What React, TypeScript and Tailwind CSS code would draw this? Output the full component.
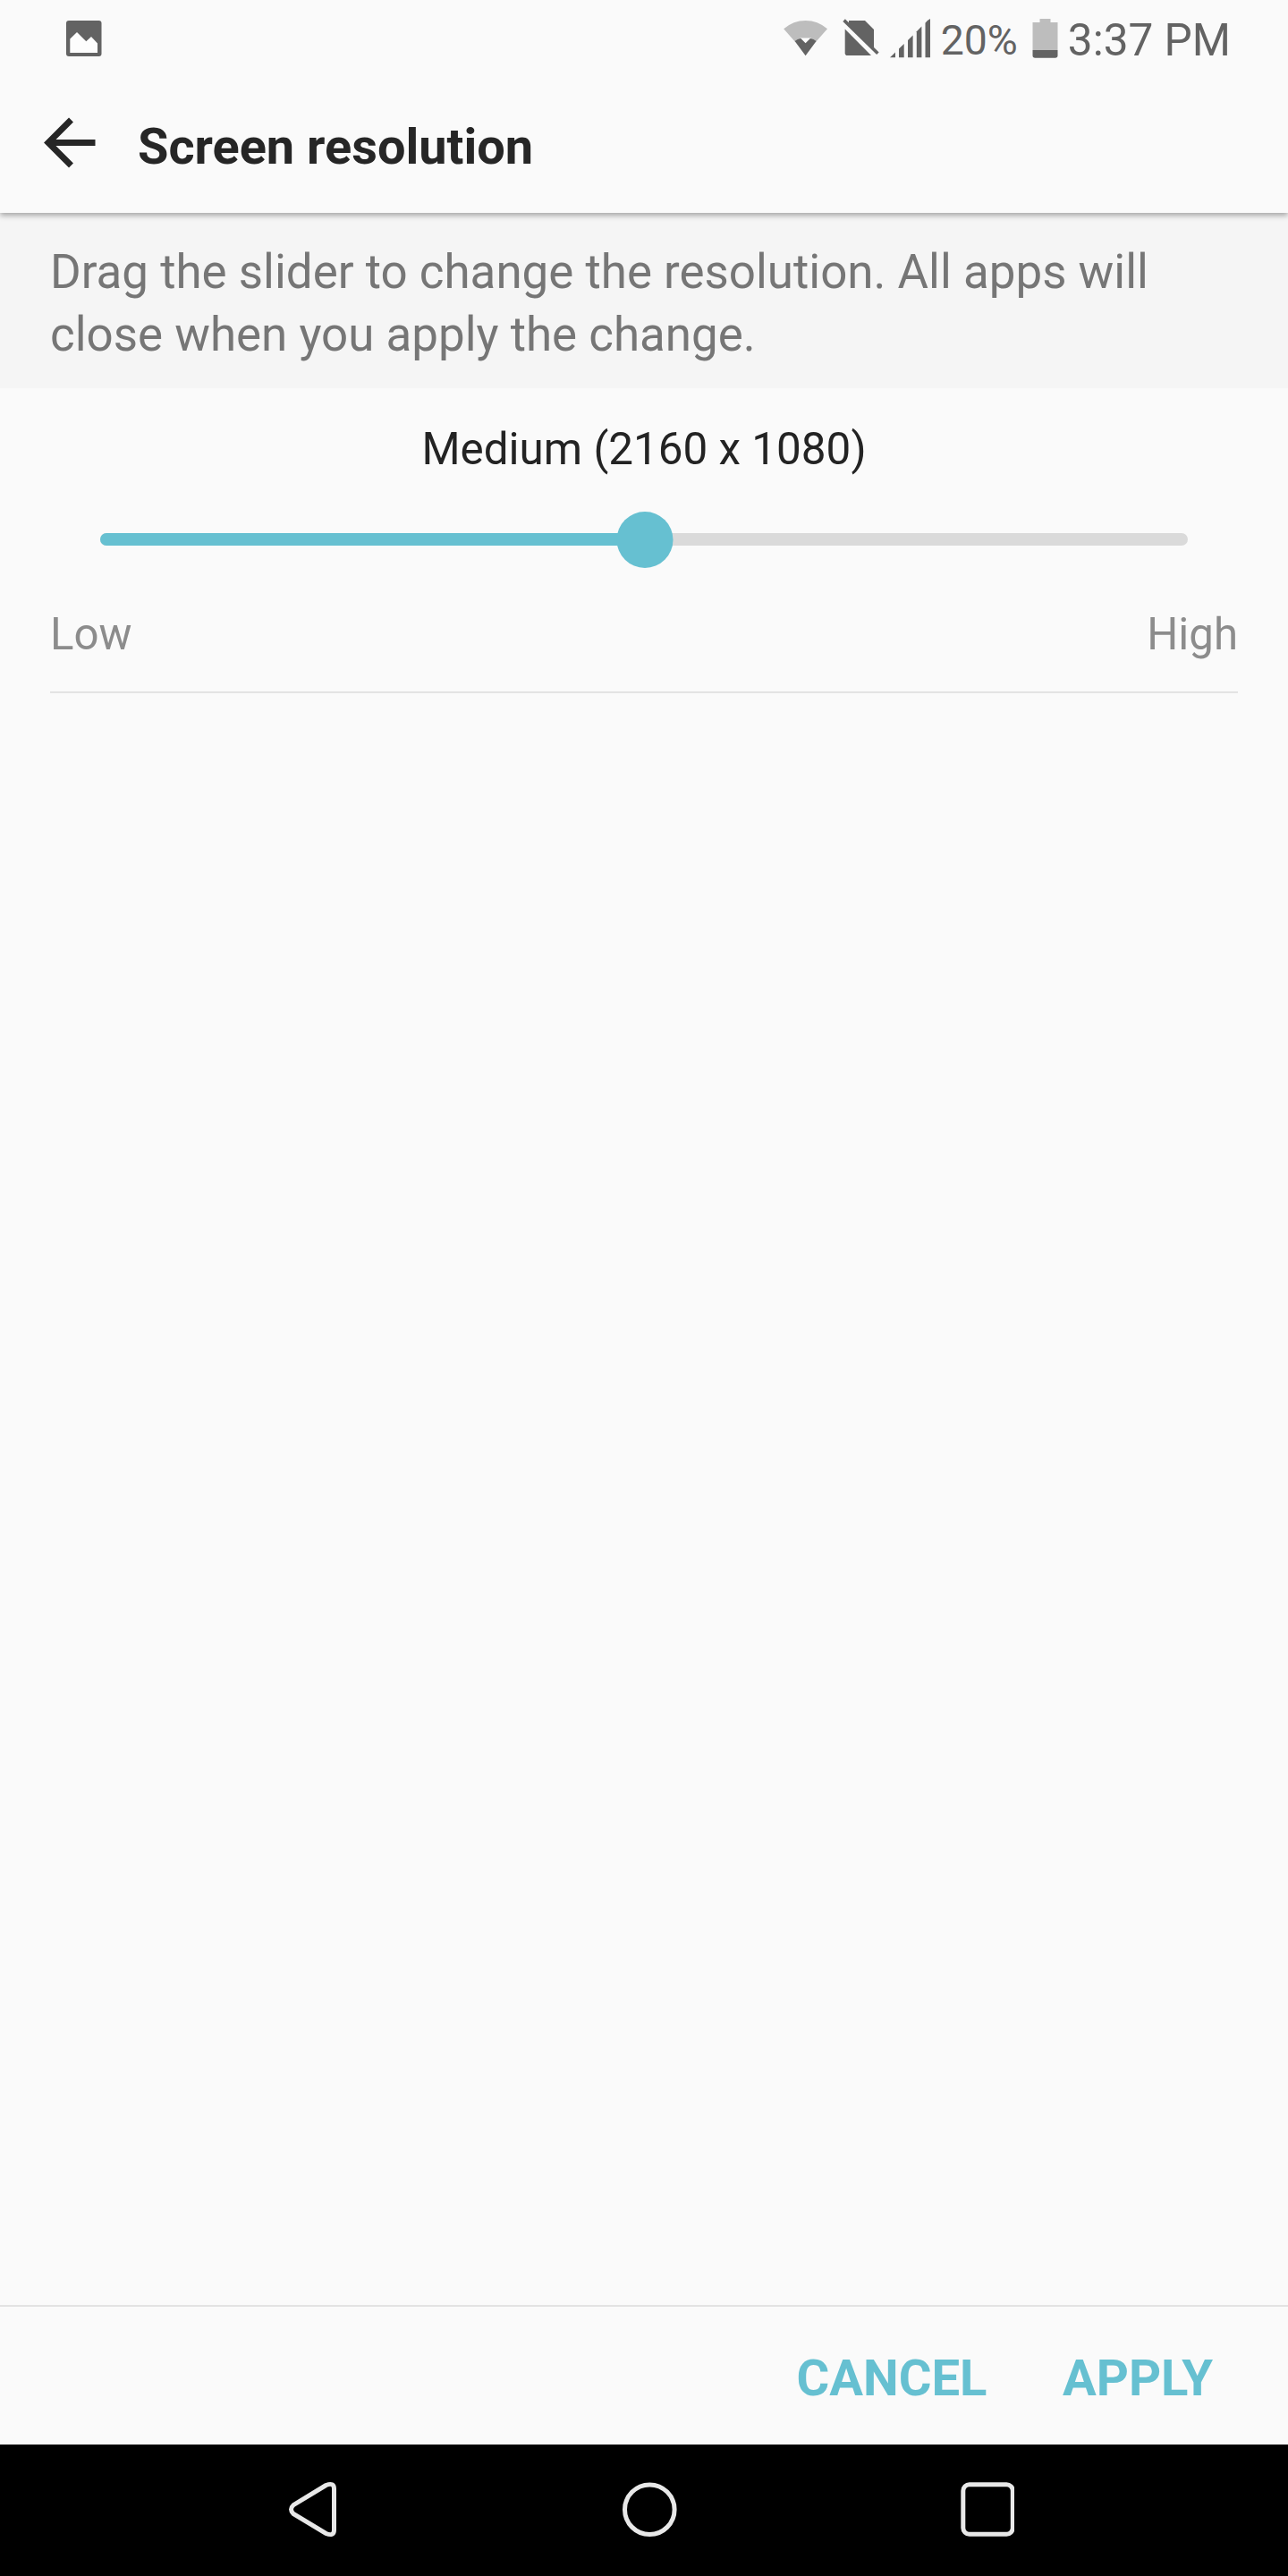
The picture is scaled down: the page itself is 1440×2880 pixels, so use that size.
import { useState } from "react";

const levels = [
  { name: "Low", size: "1440 x 720" },
  { name: "Medium", size: "2160 x 1080" },
  { name: "High", size: "2880 x 1440" },
];

function ImageIcon() {
  return (
    <svg width="40" height="44" viewBox="0 0 40 44">
      <rect x="0" y="2" width="39.5" height="40" rx="3" fill="#636363" />
      <path d="M4.3 22.5 12 15l10.3 10.3L28 20l7 7.5V38H4.3z" fill="#fdfdfd" />
    </svg>
  );
}

function WifiIcon() {
  return (
    <svg width="50" height="44" viewBox="0 0 50 44">
      <path d="M.2 11.2Q11 2 24.6 2T49 11.2L36.4 25.4 24.6 22 12.7 25.4z" fill="#bdbdbd" />
      <path d="M18.5 21.4H31L24.6 28z" fill="#fdfdfd" />
      <path d="M12.6 25Q15.5 22.3 19.3 21.9L24.6 27.2 29.9 21.9Q33.7 22.3 36.6 25L24.6 41.2z" fill="#636363" />
    </svg>
  );
}

function NoSimIcon() {
  return (
    <svg width="42" height="44" viewBox="0 0 42 44">
      <path d="M7 2h18l10 10v22.5L7 6z" fill="#636363" />
      <path d="M2.7 11.6 32 41H5.5q-2.8 0-2.8-2.8z" fill="#636363" />
      <path d="M1.6 1.6 39.4 38.8" stroke="#636363" strokeWidth="3.6" />
    </svg>
  );
}

function SignalIcon() {
  return (
    <svg width="47" height="44" viewBox="0 0 47 44" fill="#636363">
      <path d="M1 43.3 7 37.5v5.8z" />
      <path d="M11 33.6 16.7 28v15.3H11z" />
      <path d="M21 24 26.6 18.5v24.8H21z" />
      <path d="M30.8 14.2 36.4 8.6v34.7h-5.6z" />
      <path d="M40.5 4.7Q42 2 46 0v43.3h-5.5z" />
    </svg>
  );
}

function BatteryIcon() {
  return (
    <svg width="29" height="44" viewBox="0 0 29 44">
      <path d="M8.5 0h12v4h8v31H.5V4h8z" fill="#bdbdbd" />
      <path d="M.5 35h28v6q0 2.7-2.7 2.7H3.2Q.5 43.7.5 41z" fill="#636363" />
    </svg>
  );
}

function StatusBar() {
  return (
    <div className="flex h-[92px] items-start pt-[21px] pr-16 pl-[73.5px] text-[#636363]">
      <ImageIcon />
      <div className="ml-auto flex items-start">
        <WifiIcon />
        <div className="ml-4">
          <NoSimIcon />
        </div>
        <div className="ml-2.5">
          <SignalIcon />
        </div>
        <span className="ml-[11px] text-[46.4px] leading-[49px]">20%</span>
        <div className="ml-4 mr-[11px]">
          <BatteryIcon />
        </div>
        <span className="text-[49.5px] leading-[49px]">3:37 PM</span>
      </div>
    </div>
  );
}

function Header() {
  return (
    <header className="relative z-10 flex h-[146px] bg-[#fafafa] shadow-[0_3px_6px_rgba(0,0,0,0.32)] [clip-path:inset(0_0_-14px_0)]">
      <button className="mt-[38px] ml-12 h-[60px]" aria-label="Back">
        <svg width="60" height="60" viewBox="0 0 60 60" fill="none" stroke="#262626" strokeWidth="7">
          <path d="M31.5 4 6 29.5 31.5 55M6 29.5h52.5" />
        </svg>
      </button>
      <h1 className="mt-[37px] ml-[46px] text-[55.9px] leading-[70px] font-bold text-[#262626]">
        Screen resolution
      </h1>
    </header>
  );
}

export default function App() {
  const [level, setLevel] = useState(1);
  const percent = (level / (levels.length - 1)) * 100;

  return (
    <div className="flex h-[2880px] w-[1440px] flex-col bg-[#fafafa] font-['Roboto',sans-serif]">
      <StatusBar />
      <Header />

      <p className="h-[196px] bg-[#f5f5f5] pt-[31px] pr-24 pl-14 text-[52.9px] leading-[70px] text-[#767676]">
        Drag the slider to change the resolution. All apps will
        <br />
        close when you apply the change.
      </p>

      <main className="flex-1 px-14 pt-[38px]">
        <p className="text-center text-[49.4px] leading-[60px] text-[#232323]">
          {levels[level].name} ({levels[level].size})
        </p>
        <div
          className="relative mx-14 mt-10 h-[63px] pt-6"
          onClick={() => setLevel((level + 1) % levels.length)}
        >
          <div className="h-3.5 overflow-hidden rounded-full bg-[#dadada]">
            <div className="h-full bg-[#66c0d1]" style={{ width: `${percent}%` }} />
          </div>
          <div
            className="absolute top-0 ml-px size-[63px] -translate-x-1/2 rounded-full bg-[#66c0d1]"
            style={{ left: `${percent}%` }}
          />
        </div>
        <div className="mt-11 flex justify-between text-[49.2px] leading-[60px] text-[#8c8c8c]">
          <span>Low</span>
          <span>High</span>
        </div>
        <div className="mt-[34px] h-0.5 bg-[#e3e3e3]" />
      </main>

      <footer className="flex h-[156px] justify-end gap-[84.5px] border-t-2 border-[#e3e3e3] pt-[45px] pr-[84px] text-[56.2px] leading-[70px] font-bold text-[#66c0d1]">
        <button className="h-[70px]">CANCEL</button>
        <button className="h-[70px]">APPLY</button>
      </footer>

      <nav className="flex h-[147px] items-start bg-black pt-[41px] pl-[320px]">
        <svg width="62" height="64" viewBox="0 0 62 64" fill="none" stroke="#e8e8e8" strokeWidth="5">
          <path d="M44.5 4.5 8 26.7Q3 31.5 8 36.5L44.5 58.5Q53.5 62 53.5 54.5V8.5Q53.5 1 44.5 4.5z" />
        </svg>
        <svg className="ml-[312px]" width="64" height="64" viewBox="0 0 64 64" fill="none" stroke="#e8e8e8" strokeWidth="5">
          <circle cx="32.3" cy="31.7" r="27.8" />
        </svg>
        <svg className="ml-[312px]" width="64" height="64" viewBox="0 0 64 64" fill="none" stroke="#e8e8e8" strokeWidth="5">
          <rect x="6.8" y="3.7" width="55.5" height="55.5" rx="7" />
        </svg>
      </nav>
    </div>
  );
}
